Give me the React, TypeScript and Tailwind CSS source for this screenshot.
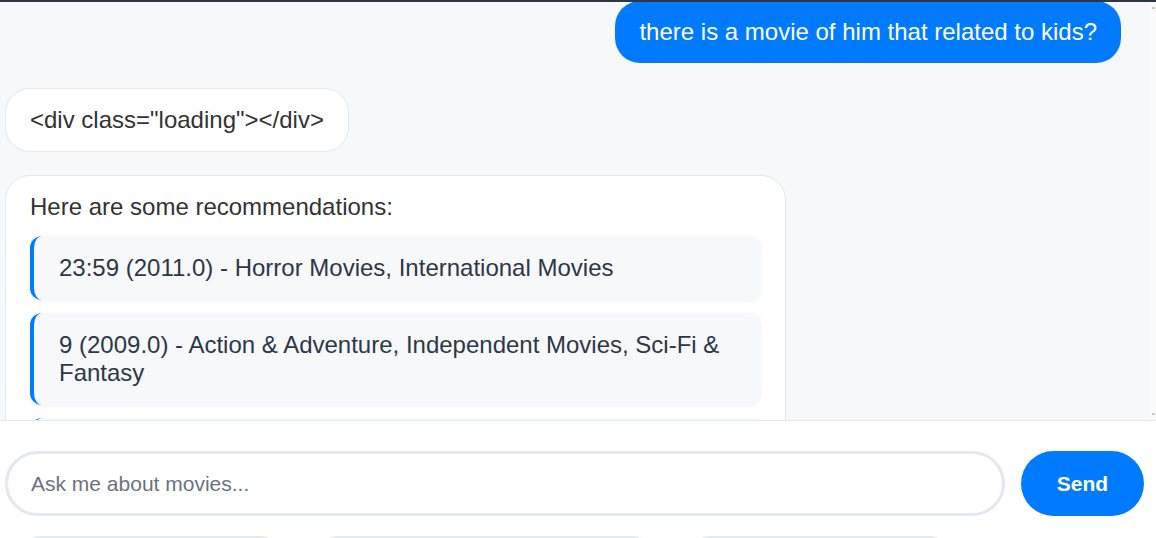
import React from 'react';

const recommendations = [
    '23:59 (2011.0) - Horror Movies, International Movies',
    '9 (2009.0) - Action & Adventure, Independent Movies, Sci-Fi & Fantasy',
    'A Champion Heart (2018.0) - Children & Family Movies, Dramas',
];

// quick-question pills, only their top edge shows in the viewport
const pillWidths = ['w-[263px]', 'w-[338px]', 'w-[263px]'];

export default function App() {
    return (
        <div className="w-[1156px] h-[538px] overflow-hidden flex flex-col bg-white font-['Liberation_Sans',Arial,sans-serif] text-[24px] leading-[28px]">
            {/* top bar */}
            <div className="h-[2px] bg-[#2d3748] shrink-0" />

            {/* Messages */}
            <div className="h-[418px] shrink-0 flex bg-[#f7f8fa] overflow-hidden">
                <div className="flex-1 flex flex-col pl-[5px] pr-[30px] -mt-px">
                    <div className="self-end bg-[#007bff] text-white rounded-[25px] px-6 py-[17px]">
                        there is a movie of him that related to kids?
                    </div>

                    <div className="self-start mt-[25px] bg-white text-[#333] border border-[#e2e8f0] rounded-[25px] px-6 py-[17px]">
                        {'<div class="loading"></div>'}
                    </div>

                    <div className="self-start mt-[23px] w-[781px] shrink-0 bg-white text-[#333] border border-[#e2e8f0] rounded-[25px] px-6 pt-[17px] pb-6">
                        <p>Here are some recommendations:</p>
                        <div className="mt-[15px] flex flex-col gap-[13px]">
                            {recommendations.map(r => (
                                <div
                                    key={r}
                                    className="bg-[#f7f8fa] text-[#2d3748] border-l-4 border-[#007bff] rounded-[12px] pl-[25px] pr-6 py-[18px] shadow-[0_1px_4px_rgba(0,0,0,0.06)]"
                                >
                                    {r}
                                </div>
                            ))}
                        </div>
                    </div>
                </div>
                {/* scrollbar */}
                <div className="w-[5px] shrink-0 bg-[#fbfbfc] flex flex-col justify-between py-[5px] items-center">
                    <div className="w-[3px] h-[2px] bg-[#c8c8c8]" />
                    <div className="w-[3px] h-[2px] bg-[#c8c8c8]" />
                </div>
            </div>

            {/* Input area */}
            <div className="flex-1 border-t border-[#e2e8f0] bg-white pt-[30px] pl-[5px] pr-[12px]">
                <div className="flex items-center gap-4">
                    <input
                        placeholder="Ask me about movies..."
                        className="flex-1 h-[65px] border-[3px] border-[#e2e8f0] rounded-full pl-[23px] pr-5 outline-none text-[#333] placeholder:text-[#6b7280] text-[21px] leading-[24px]"
                    />
                    <button className="w-[123px] h-[65px] bg-[#007bff] text-white font-bold rounded-full text-[21px] leading-[24px]">
                        Send
                    </button>
                </div>
                <div className="flex gap-[34px] mt-[20px] pl-[14px]">
                    {pillWidths.map((w, i) => (
                        <div
                            key={i}
                            className={`${w} h-[44px] shrink-0 border-2 border-[#e2e8f0] rounded-[22px] bg-white`}
                        />
                    ))}
                </div>
            </div>
        </div>
    );
}
